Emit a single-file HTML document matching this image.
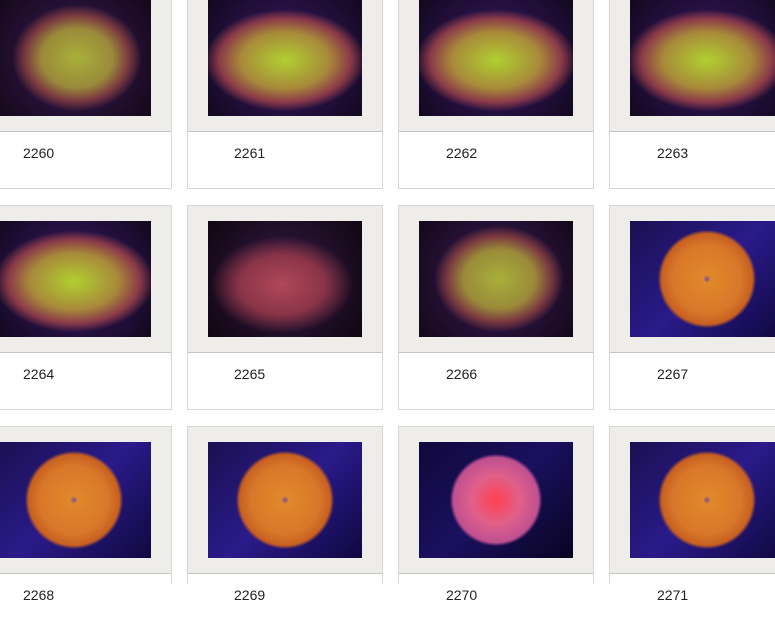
<!DOCTYPE html>
<html><head><meta charset="utf-8"><style>
html,body{margin:0;padding:0;background:#fff;width:775px;height:625px;overflow:hidden;position:relative;font-family:"Liberation Sans",Arial,sans-serif}
.card{position:absolute;width:194px;height:203px;border:1px solid #d6d6d6;background:#fff}
.top{position:absolute;left:0;top:0;width:194px;height:146px;background:#eeede9;border-bottom:1px solid #c4c4c4}
.img{position:absolute;left:20px;top:15px;width:154px;height:116px}
.lbl{position:absolute;font-size:14px;color:#222}
.g{background:radial-gradient(ellipse 42% 46% at 52% 50%,#a8b03a 0%,#9a8a3a 55%,#7a3a40 80%,rgba(60,20,70,0) 100%),radial-gradient(circle at 50% 50%,#3a1a5a,#140818)}
.g2{background:radial-gradient(ellipse 52% 44% at 50% 52%,#b0d030 0%,#a88a3a 55%,#8a3a48 82%,rgba(60,20,70,0) 100%),radial-gradient(circle at 50% 50%,#3a1a6a,#12081e)}
.g3{background:radial-gradient(ellipse 46% 42% at 48% 55%,#b04858 0%,#8a3448 60%,rgba(50,20,50,0) 100%),radial-gradient(circle at 50% 50%,#341a48,#100610)}
.o{background:radial-gradient(circle at 50% 50%,#7a4aa0 0%,#e0882a 4%,#d8782a 35%,#c86020 47%,rgba(40,20,120,0) 51%),linear-gradient(135deg,#1a1050,#2a1a8a 50%,#100840)}
.p{background:radial-gradient(circle at 50% 50%,#ff4050 0%,#e0608a 25%,#c05090 44%,rgba(40,20,120,0) 48%),linear-gradient(135deg,#10083a,#1a1060 50%,#080420)}
.r3{height:157px;border-bottom:none}
</style></head><body>

<div class="card" style="left:-24px;top:-16px"><div class="top"><div class="img g"></div></div></div>
<div class="card" style="left:187px;top:-16px"><div class="top"><div class="img g2"></div></div></div>
<div class="card" style="left:398px;top:-16px"><div class="top"><div class="img g2"></div></div></div>
<div class="card" style="left:609px;top:-16px"><div class="top"><div class="img g2"></div></div></div>
<div class="lbl" style="left:23px;top:145px">2260</div>
<div class="lbl" style="left:234px;top:145px">2261</div>
<div class="lbl" style="left:446px;top:145px">2262</div>
<div class="lbl" style="left:657px;top:145px">2263</div>

<div class="card" style="left:-24px;top:205px"><div class="top"><div class="img g2"></div></div></div>
<div class="card" style="left:187px;top:205px"><div class="top"><div class="img g3"></div></div></div>
<div class="card" style="left:398px;top:205px"><div class="top"><div class="img g"></div></div></div>
<div class="card" style="left:609px;top:205px"><div class="top"><div class="img o"></div></div></div>
<div class="lbl" style="left:23px;top:366px">2264</div>
<div class="lbl" style="left:234px;top:366px">2265</div>
<div class="lbl" style="left:446px;top:366px">2266</div>
<div class="lbl" style="left:657px;top:366px">2267</div>

<div class="card r3" style="left:-24px;top:426px"><div class="top"><div class="img o"></div></div></div>
<div class="card r3" style="left:187px;top:426px"><div class="top"><div class="img o"></div></div></div>
<div class="card r3" style="left:398px;top:426px"><div class="top"><div class="img p"></div></div></div>
<div class="card r3" style="left:609px;top:426px"><div class="top"><div class="img o"></div></div></div>
<div class="lbl" style="left:23px;top:587px">2268</div>
<div class="lbl" style="left:234px;top:587px">2269</div>
<div class="lbl" style="left:446px;top:587px">2270</div>
<div class="lbl" style="left:657px;top:587px">2271</div>

</body></html>
